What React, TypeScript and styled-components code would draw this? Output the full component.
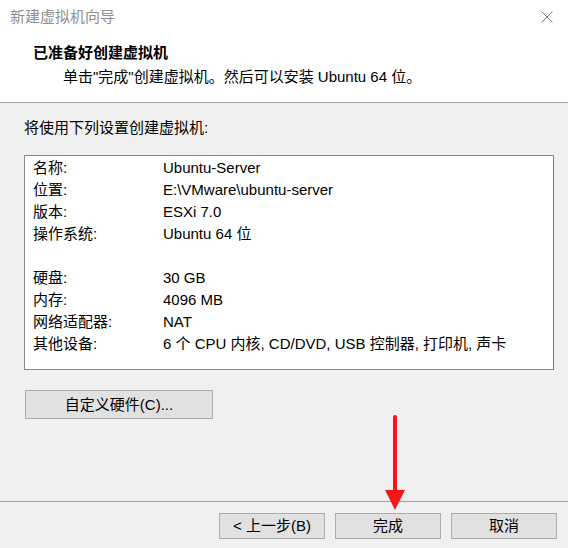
import React from "react";
import styled, { createGlobalStyle } from "styled-components";

const Global = createGlobalStyle`
  html, body { margin: 0; padding: 0; }
  body {
    background: #f0f0f0;
    font-family: "Liberation Sans", "Noto Sans CJK SC", sans-serif;
    font-size: 15px;
    color: #000;
  }
`;

const Window = styled.div`
  position: relative;
  width: 568px;
  height: 548px;
  display: flex;
  flex-direction: column;
  background: #f0f0f0;
  overflow: hidden;
`;

const Header = styled.div`
  background: #ffffff;
  height: 102px;
  border-bottom: 1px solid #a0a0a0;
  display: flex;
  flex-direction: column;
`;

const TitleBar = styled.div`
  height: 34px;
  display: flex;
  align-items: center;
  justify-content: space-between;
  padding: 0 15px 0 10px;
`;

const TitleText = styled.span`
  color: #8f8f8f;
  font-size: 15px;
  line-height: 20px;
`;

const CloseIcon = styled.svg`
  width: 12px;
  height: 12px;
  display: block;
`;

const Heading = styled.div`
  margin-top: 8px;
  padding-left: 33px;
  font-weight: bold;
  font-size: 15px;
  line-height: 22px;
`;

const SubHeading = styled.div`
  margin-top: 2px;
  padding-left: 63px;
  font-size: 15px;
  line-height: 22px;
`;

const Content = styled.div`
  flex: 1;
  display: flex;
  flex-direction: column;
  padding: 14px 14px 0 24px;
`;

const Intro = styled.div`
  line-height: 22px;
`;

const SummaryBox = styled.div`
  margin-top: 16px;
  height: 215px;
  box-sizing: border-box;
  background: #ffffff;
  border: 1px solid #8a8a8a;
  border-right-color: #7a7a7a;
  padding: 1px 0 0 8px;
`;

const Row = styled.div`
  display: grid;
  grid-template-columns: 130px 1fr;
  height: 22px;
  line-height: 22px;
  white-space: nowrap;
`;

const Spacer = styled.div`
  height: 22px;
`;

const ButtonBase = styled.button`
  font-family: "Liberation Sans", "Noto Sans CJK SC", sans-serif;
  font-size: 15px;
  color: #000;
  background: #e1e1e1;
  border: 1px solid #adadad;
  border-radius: 0;
  padding: 0;
  line-height: 20px;
  display: flex;
  align-items: center;
  justify-content: center;
`;

const CustomizeButton = styled(ButtonBase)`
  margin-top: 20px;
  margin-left: 1px;
  width: 188px;
  height: 29px;
`;

const Footer = styled.div`
  height: 47px;
  border-top: 1px solid #a0a0a0;
  display: flex;
  justify-content: flex-end;
  align-items: flex-start;
  gap: 10px;
  padding: 11px 11px 0 0;
  box-sizing: border-box;
`;

const FooterButton = styled(ButtonBase)`
  width: 106px;
  height: 26px;
`;

const Arrow = styled.svg`
  position: absolute;
  left: 383px;
  top: 412px;
  width: 24px;
  height: 100px;
`;

const rows: [string, string][] = [
  ["名称:", "Ubuntu-Server"],
  ["位置:", "E:\\VMware\\ubuntu-server"],
  ["版本:", "ESXi 7.0"],
  ["操作系统:", "Ubuntu 64 位"],
];

const rows2: [string, string][] = [
  ["硬盘:", "30 GB"],
  ["内存:", "4096 MB"],
  ["网络适配器:", "NAT"],
  ["其他设备:", "6 个 CPU 内核, CD/DVD, USB 控制器, 打印机, 声卡"],
];

export default function App() {
  return (
    <>
      <Global />
      <Window>
        <Header>
          <TitleBar>
            <TitleText>新建虚拟机向导</TitleText>
            <CloseIcon viewBox="0 0 12 12">
              <path d="M0.5 0.5 L11.5 11.5 M11.5 0.5 L0.5 11.5" stroke="#7a7a7a" strokeWidth="1" fill="none" />
            </CloseIcon>
          </TitleBar>
          <Heading>已准备好创建虚拟机</Heading>
          <SubHeading>单击"完成"创建虚拟机。然后可以安装 Ubuntu 64 位。</SubHeading>
        </Header>
        <Content>
          <Intro>将使用下列设置创建虚拟机:</Intro>
          <SummaryBox>
            {rows.map(([k, v]) => (
              <Row key={k}>
                <span>{k}</span>
                <span>{v}</span>
              </Row>
            ))}
            <Spacer />
            {rows2.map(([k, v]) => (
              <Row key={k}>
                <span>{k}</span>
                <span>{v}</span>
              </Row>
            ))}
          </SummaryBox>
          <CustomizeButton>自定义硬件(C)...</CustomizeButton>
        </Content>
        <Footer>
          <FooterButton>&lt; 上一步(B)</FooterButton>
          <FooterButton>完成</FooterButton>
          <FooterButton>取消</FooterButton>
        </Footer>
        <Arrow viewBox="0 0 24 100">
          <line x1="12" y1="5" x2="12" y2="84" stroke="#f01818" strokeWidth="4" strokeLinecap="round" />
          <polygon points="2,78 22,78 12,98" fill="#f01818" />
        </Arrow>
      </Window>
    </>
  );
}
